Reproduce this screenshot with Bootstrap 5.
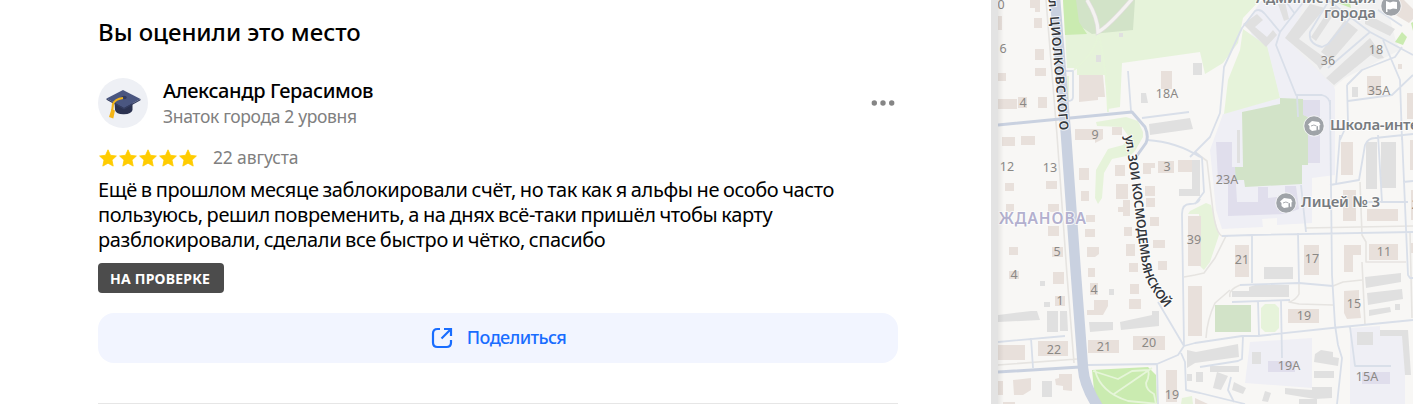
<!DOCTYPE html>
<html lang="ru">
<head>
  <meta charset="UTF-8">
  <meta name="viewport" content="width=device-width, initial-scale=1">
  <title>Отзыв</title>
  <!-- Bootstrap CSS -->
  <link href="https://cdn.jsdelivr.net/npm/bootstrap@5.3.0/dist/css/bootstrap.min.css" rel="stylesheet">
  <style>
    body { height: 404px; overflow: hidden; font-family: "Noto Sans", sans-serif; color: #000; background: #fff; }
    .panel { width: 991px; padding: 17px 93px 0 98px; }
    .panel-title { font-size: 24px; line-height: 30px; font-weight: 500; letter-spacing: -.05px; margin-bottom: 31px; }
    .avatar { width: 50px; height: 50px; background: #eef0f5; }
    .author-info { margin-left: 15px; }
    .author { font-size: 20px; line-height: 25px; font-weight: 500; letter-spacing: -.38px; }
    .level, .review-date { font-size: 17.5px; line-height: 25px; color: #808080; letter-spacing: -.35px; }
    .level { padding-top: 1px; margin-bottom: -1px; }
    .author-row { margin-bottom: 17px; }
    .more { margin-right: -2px; }
    .stars { width: 100px; height: 20px; }
    .review-date { margin-left: 15px; letter-spacing: -.15px; }
    .review-text { font-size: 20px; line-height: 25px; letter-spacing: -.38px; word-spacing: -.9px; margin: 7px 0 11px; white-space: nowrap; }
    .status { height: 30px; padding: 0 12px; border-radius: 4px; background: #4c4c4c; font-size: 14px; font-weight: 700; letter-spacing: .22px; line-height: 31px; width: 126px; white-space: nowrap; }
    .share { height: 50px; border-radius: 16px; background: #f2f5ff; color: #196dff; font-size: 18px; font-weight: 500; letter-spacing: -.62px; margin-top: 20px; }
    .share:hover { background: #e6ecff; color: #196dff; }
    .share svg { margin-right: 13px; }
    .share span { padding-bottom: 2px; }
    .divider { margin-top: 40px; border-top: 1px solid #e6e6e6; }
    .gutter { width: 7px; background: #e3e3e3; }

    /* map layers */
    .ground { fill: #efeff5; }
    .yard { fill: #f1f1f1; }
    .grass { fill: #e6f3da; }
    .park { fill: #caebb0; }
    .field { fill: #d2e3c8; }
    .house { fill: #e8e0db; }
    .block { fill: #e0e0e0; }
    .school { fill: #e0deec; }
    .lane, .road, .alley, .walk { fill: none; stroke-linejoin: round; }
    .alley { stroke: #e6e4e1; stroke-width: 1.6; }
    .lane { stroke: #d9dfe9; stroke-width: 1.8; }
    .road { stroke: #c9d1e0; }
    .walk { stroke: #e6f5d9; stroke-width: 1.8; }
    .num { font-size: 12.5px; fill: #8b8885; text-anchor: middle; }
    .poi { font-size: 15px; font-weight: 600; fill: #777b80; }
    .street { font-size: 12.5px; font-weight: 600; fill: #33363b; }
    .district { font-size: 15.5px; font-weight: 600; fill: #b3b0cf; }
    .halo { stroke: #fff; stroke-opacity: .75; stroke-width: 2px; stroke-linejoin: round; paint-order: stroke; }
  </style>
</head>
<body class="d-flex">

  <!-- Review -->
  <main class="panel flex-shrink-0">
    <h2 class="panel-title">Вы оценили это место</h2>

    <div class="author-row d-flex align-items-center">
      <div class="avatar rounded-circle flex-shrink-0">
        <svg width="50" height="50" viewBox="0 0 50 50">
          <path d="M16.500 24h18v8q-1 4-8.500 4.300T17 32z" fill="#2b3250"/>
          <path d="M8.500 20.500 25 12l17.500 9L26 30z" fill="#4a5680"/>
          <path d="M8.500 20.500 26 30l16.500-9v1.300L26 31.500 8.500 21.800z" fill="#343d60"/>
          <ellipse cx="26" cy="19.500" rx="2.800" ry="1.700" fill="#323b60"/>
          <path d="M25 20q-8 1-10 6l-.8 7" fill="none" stroke="#f0b41c" stroke-width="2.200"/>
          <path d="m13.500 31 3.500 1.500-1.700 8-4.300-1.500z" fill="#f5b517"/>
        </svg>
      </div>
      <div class="author-info flex-grow-1">
        <div class="author">Александр Герасимов</div>
        <div class="level">Знаток города 2 уровня</div>
      </div>
      <svg class="more" width="30" height="10" viewBox="0 0 30 10" fill="#858585"><circle cx="4.300" cy="5" r="2.700"/><circle cx="13" cy="5" r="2.700"/><circle cx="21.700" cy="5" r="2.700"/></svg>
    </div>

    <div class="d-flex align-items-center">
      <svg class="stars" viewBox="0 0 100 20">
        <defs><path id="star" d="m10 1.800 2.500 5.500 5.900.7-4.400 4.100 1.200 6L10 15.200l-5.200 2.900 1.200-6L1.600 8l5.900-.7z" fill="#fc0" stroke="#fc0" stroke-width=".8" stroke-linejoin="round"/></defs>
        <use href="#star"/><use href="#star" x="20"/><use href="#star" x="40"/><use href="#star" x="60"/><use href="#star" x="80"/>
      </svg>
      <span class="review-date">22 августа</span>
    </div>

    <p class="review-text">Ещё в прошлом месяце заблокировали счёт, но так как я альфы не особо часто<br>пользуюсь, решил повременить, а на днях всё-таки пришёл чтобы карту<br>разблокировали, сделали все быстро и чётко, спасибо</p>

    <div class="status text-white">НА ПРОВЕРКЕ</div>

    <a href="#" class="share btn border-0 w-100 p-0 d-flex align-items-center justify-content-center">
      <svg width="24" height="24" viewBox="0 0 24 24" fill="none" stroke="#196dff" stroke-width="2.200">
        <path d="M10 3H7.500Q3 3 3 7.500v9Q3 21 7.500 21h9q4.500 0 4.500-4.500V14"/>
        <path d="M14 3h7v7M21 3l-9.500 9.500"/>
      </svg>
      <span>Поделиться</span>
    </a>

    <div class="divider"></div>
  </main>

  <div class="gutter flex-shrink-0"></div>

  <!-- Map -->
  <svg class="flex-shrink-0" width="415" height="404" viewBox="998 0 415 404">
    <defs>
      <linearGradient id="edge"><stop offset="0" stop-color="#000" stop-opacity=".07"/><stop offset="1" stop-color="#000" stop-opacity="0"/></linearGradient>
      <path id="tsiolkovskogo" d="M1048-7 1060 133"/>
      <path id="kosmodemyanskoy" d="M1125 136 1130 170 1134 202 1139 243 1143 270Q1147 287 1168 311"/>
      <g id="cap">
        <circle r="10.200" fill="#9fa3a8" stroke="#fff" stroke-width=".8"/>
        <path d="m-6-1.500 4-3.500 7 1 1.500 3-1 .3v4.500H4V0L2.500.5v3.800L-2 5l-2.500-2V0z" fill="#fff"/>
        <path d="M-3 0q3-2 5.500 0" fill="none" stroke="#9fa3a8" stroke-width=".9"/>
      </g>
    </defs>
    <rect x="998" width="415" height="404" fill="#f8f7f5"/>

    <path class="ground" d="M1262 0 1246 22 1280 97 1223 114 1210 150 1216 210 1222 229 1263 227 1262 219 1277 218V225L1312 223V178L1335 175V90L1332 80 1310 30V0z"/>
    <path class="yard" d="M1305 0H1385L1395 38 1400 50 1345 78 1334 87 1290 42z"/>
    <path class="ground" d="M1250 342l62-4v50l-67-5zM1350 328l30-2v8h25v70h-55z"/>

    <path class="grass" d="M1063 0H1260L1243 18 1238 43 1223 63 1205 74 1200 52 1122 63 1120 107 1108 109 1105 75H1077V68H1067L1065 33zM1067 76h2v24l-2 1zM1243 29 1267 46 1280 98 1224 114 1228 80 1240 50zM1096 122 1126 117 1138 121 1143 132V137L1135 151 1131 155 1112 159 1104 173 1102 198 1098 204 1095 198 1096 170 1108 149 1123 145 1129 137 1122 127 1097 126zM1190 211 1206 203 1211 205 1219 235 1210 262 1204 270 1199 265V214H1188zM1265 304h10l4 4v20l-4 4h-10l-4-4v-20zM1182 398l10-2 1 8h-12zM1202 0h8l-4 5z"/>
    <path class="field" d="M1074 0H1135L1133 30 1092 34 1077 24zM1242 112 1280 104V98L1303 99 1304 115 1308 117V165H1302V184L1245 187 1244 180H1235V167H1243zM1215 305h36v27h-36z"/>
    <path class="park" d="M1063 0h13l3 22 8 12-22 1zM1092 370 1148 367 1156 375 1157 404H1100L1094 390zM1402 32l5 5-4 8-8-3zM1338 3l12-1 1 6zM1411 23l2-1v9z"/>

    <path class="school" d="M1303 100h17v63h-12v-46l-5-2zM1216 142h16v25h3l2 35h21v-15h10v11l17-2v-10h11l3 23-13 5-58 2v-32l-10-3zM1268 361h27v11h-27zM1362 372h28v12h-28z"/>

    <!-- houses -->
    <path class="house" d="M1030 0h10v12h-5v-4h-5zM1034 18h8v10h-8zM998 16h4v14h-4zM1035 49h9v11h-9zM1035 68h11v8h-11zM998 73h8v8h-8zM998 99h19v10h-19zM1018 97h9v11h-9zM1038 97h9v11h-9zM1079 75h24l2 22h-7v3l-19 2zM1075 129h28v10l-8 4v-3h-20zM1112 127h10v8h-10zM1161 71h11v18h-11zM1002 137h13v9h-13zM1021 136h14v9h-14z"/>
    <path class="house" d="M1005 183h9v8h-9zM1046 181h11v8h-11zM1006 204h8v8h-8zM1048 204h11v8h-11zM1048 226h11v10h-11zM1009 247h9v8h-9zM1052 247h11v10h-11zM1009 271h10v8h-10zM1053 272h11v12h-11zM1079 168h10v12h-10zM1081 191h8v10h-8zM1086 215h9v7h-9zM1085 229h10v8h-10zM1087 247h12v7l-4 3h-8zM1088 268h7v9h-7zM1115 165h10v11h-10zM1116 184h12v15h-12zM1123 200h7v16h-7v-4h-5v-5h5zM1143 163h12v5h-4v6h-8zM1158 161h16v12h-16zM1178 160h14v12h-14zM1145 186h10v10h-10zM1146 198h9v9h-9zM1150 217h9v9h-9zM1124 227h8v9h-8zM1153 240h12v8h-12zM1126 244h9v12h-9zM1129 263h9v9h-9zM1158 261h9v9h-9zM1188 216h13v50h-13z"/>
    <path class="house" d="M1055 296h10v10h-10zM1090 283h8v12h-8zM1130 284h9v10h-9zM1129 299h12v10h-12zM1094 300h14v6l-5 9h-16v-5h7zM1133 336h32v14h-32zM1088 340h31v13h-31zM1038 341h30v15h-30zM998 345h27v15h-27zM1013 380l18-2v12l-8 5h-9zM1055 379l4-1v-4h13v17l-9-1v-4l-7-1zM998 381h5v14h-5zM1188 286h14v50h-14zM1166 370h11v32h-11zM1003 402h12v2h-12zM1195 398l13 6h-13z"/>
    <path class="house" d="M1341 142h12v33h-12zM1410 140h3v30h-3zM1343 190h13v31h-13zM1367 209h31v12h-31zM1411 190h2v30h-2zM1369 244h29v16h-29zM1344 245h17v10h-8v17h-9zM1304 245h15v30h-15zM1235 245h14v32h-14zM1411 243h2v10h-2zM1367 76h14v19h-14zM1398 64h4v5h-4zM1407 93h6v26h-6zM1385 0h19l9 9v10l-4 4-20-12zM1344 291l15-1v13l2 15-14 1-3-6zM1288 309h31v14h-31zM1344 265h9v7h-9z"/>

    <!-- blocks of flats, garages -->
    <path class="block" d="M1096 55h5v7h-5zM1119 33h4v4h-4zM1193 63h9v12h-9zM1141 93h5l2 10h-7zM1149 124l41-6 3 11-43 6zM1192 160h8v36h-21v-7h13zM1237 130h3v33h-3zM1366 142h11v47h-11zM1381 142h15v46h-15zM1264 267h29v12h-29z"/>
    <path class="block" d="M1243 24 1257 14 1263 20 1255 27 1267 37 1273 30 1277 35 1266 47zM1278 4l7-2 4 17-5 2zM1310 4 1325 8 1299 39 1328 60 1320 70 1317 65 1285 38zM1332 5l6 3-22 33-5-4zM1345 20 1358 30 1332 60 1321 52zM1370 38 1384 58 1378 59 1371 55 1334 85 1326 78zM1365 13l30 16-5 7-25-12zM1352 87h6v10h-6z"/>
    <path class="block" d="M1040 281h5v5h-5zM1044 302h6v5h-6zM998 315l33-4h6l3 9-42 2zM1047 311h11v21h-11zM1060 311h7l1 20h-8zM1109 289h5v6h-5zM1089 322h24v8l-23 2zM1120 322l32-7v-4h7v15l-38 4zM1042 381h10v16h-10zM1187 350l9 2 42-8 1 13-44 6-8 5zM1187 374h5v7h-5zM1196 372h7v10h-7z"/>
    <path class="block" d="M1365 277l36-4v9l-35 6zM1367 293l35-4 1 10-35 6zM1369 310l21-3 1 5-22 4zM1395 304h5v6h-5zM1232 291h17l0-4 6-2h34v12h-57zM1252 352h9v12h-9zM1210 366h29v6h-29zM1217 372l11 4-7 14-8-2zM1234 382l12 6-3 6-11-4zM1265 391l6 2-3 9-6-1zM1285 388l27 2v-3h20v11l-17 1-30-5zM1315 354l6-4 12 2v5l6 1-1 8-24-4zM1314 371h20v7h-20zM1299 399h18v5h-18zM1357 332h16v13h-16zM1380 330h28l3 45h-6l-3-39h-22z"/>

    <!-- minor ways -->
    <path class="alley" d="M1046 0 1057 135 1067 275 1074 363M998 365 1077 359M1195 152l12 9 6 50q3 22 9 25h6M1226 236 1215 258 1204 273 1195 275 1184 277M1305 228 1413 226M1360 182 1362 235 1366 242V262H1406M1362 262 1365 325M1333 286l10-4 19-2M1230 290 1215 303Q1207 320 1206 338M1240 285q-12 5-10 12M1299 284v10q-3 6-10 8l10 2 34 1M1410 232 1412 318"/>
    <path class="walk" d="M1098 32Q1098 50 1074 70M1098 32Q1106 60 1108 112"/>
    <path class="walk" d="M1093 371 1118 379 1132 371 1149 370M1152 368 1114 394M1095 370Q1100 392 1128 401L1158 404M1148 370Q1150 376 1146 383 1146 390 1154 394L1156 404"/>
    <path class="lane" d="M1066 71h7v26q0 4-5 4M1128 71 1131 111M1142 118 1189 112M1147 140Q1177 142 1200 157M1190 157 1210 137 1220 113 1224 67 1242 28 1255 11Q1260 8 1265 14L1280 32M1200 199q-2 5-10 5-8 0-8 10L1184 346M1195 152l7 6 2 34-9 12M1222 236 1252 235 1413 232M1252 235V283M1298 233 1299 283M1330 100 1332 275 1335 325 1338 345 1342 358 1337 404M1330 185 1359 180 1365 145Q1368 138 1375 138L1413 134M1340 135 1336 185M1378 135 1382 202M1365 202H1408M1402 135 1408 275 1410 278H1413M1403 182 1413 181M1301 185 1306 232"/>
    <path class="lane" d="M1305 0 1280 32 1276 45 1296 95H1322Q1330 97 1330 105M1297 95 1298 117M1287 3 1295 14M1328 2 1310 32Q1308 44 1322 47L1328 44 1352 16M1328 0 1370 32 1413 55M1370 32 1328 68M1383 40 1400 80 1402 140M1347 85 1362 70 1395 57 1402 47M1347 85 1348 122 1340 140M1348 101 1392 95 1413 75M1378 10 1402 26"/>
    <path class="lane" d="M1088 365 1157 364 1178 355 1184 346 1195 343 1242 336 1258 336 1332 328 1413 320M1184 346 1158 302M1181 353 1185 362 1186 390 1200 393 1245 404M998 342 1065 336M1031 338 1033 368M1157 364 1158 404M1240 285 1299 283 1333 286M1232 302 1290 300M1258 301 1259 336M1281 301 1282 358M1243 336 1242 359 1238 361 1200 367M1231 377l-3 13 6 12M1350 327 1355 366H1391"/>

    <path d="M1087 0Q1098 18 1098 32 1108 27 1132-1" fill="none" stroke="#dfdedb" stroke-width="4.500"/>
    <path d="M1087 0Q1098 18 1098 32 1108 27 1132-1" fill="none" stroke="#f4f2f1" stroke-width="3.200"/>

    <!-- main roads -->
    <path class="road" stroke-width="3" d="M998 125 1132 112 1145 127Q1149 136 1146 143L1136 157M998 372 1080 367"/>
    <path class="road" stroke-width="10.500" d="M1055-2 1066 135 1076 275 1083 368Q1084 385 1098 407"/>

    <!-- house numbers -->
    <g class="num">
      <text x="1001" y="9">0</text><text x="1003" y="53">6</text><text x="1023" y="107">4</text><text x="1095" y="139">9</text>
      <text x="1007" y="171">12</text><text x="1050" y="172">13</text><text x="1167" y="98">18А</text><text x="1167" y="171">3</text>
      <text x="1057" y="256">5</text><text x="1014" y="279">4</text><text x="1060" y="305">1</text><text x="1094" y="294">4</text>
      <text x="1054" y="354">22</text><text x="1104" y="351">21</text><text x="1149" y="347">20</text><text x="1172" y="399">19</text>
      <text x="1194" y="244">39</text><text x="1242" y="264">21</text><text x="1312" y="263">17</text><text x="1384" y="256">11</text>
      <text x="1304" y="320">19</text><text x="1354" y="308">15</text><text x="1289" y="370">19А</text><text x="1367" y="381">15А</text>
      <text x="1328" y="65">36</text><text x="1376" y="54">18</text><text x="1379" y="95">35А</text><text x="1227" y="184">23А</text>
      <text x="1415" y="209">2</text>
    </g>

    <!-- names -->
    <text class="district halo" x="999" y="224" textLength="87">ЖДАНОВА</text>
    <text class="street halo"><textPath href="#tsiolkovskogo" textLength="138">ул. ЦИОЛКОВСКОГО</textPath></text>
    <text class="street halo"><textPath href="#kosmodemyanskoy" textLength="180">ул. ЗОИ КОСМОДЕМЬЯНСКОЙ</textPath></text>
    <g class="poi halo">
      <text x="1256" y="3" textLength="120">Администрация</text>
      <text x="1324" y="18" textLength="52">города</text>
      <text x="1330" y="130" letter-spacing="-.3">Школа-интернат</text>
      <text x="1301" y="207" textLength="79">Лицей № 3</text>
    </g>
    <use href="#cap" x="1314" y="126"/>
    <use href="#cap" x="1286" y="203"/>
    <circle cx="1391" cy="6" r="10.200" fill="#9fa3a8" stroke="#fff" stroke-width=".8"/>
    <path d="M1386 12V1l4 1.500 3-1 4 .5v7l-4-.5-3 1-2.500-.5v3z" fill="#fff"/>

    <rect x="998" width="6" height="404" fill="url(#edge)"/>
  </svg>

  <!-- Bootstrap JS Bundle -->
  <script src="https://cdn.jsdelivr.net/npm/bootstrap@5.3.0/dist/js/bootstrap.bundle.min.js"></script>
</body>
</html>
